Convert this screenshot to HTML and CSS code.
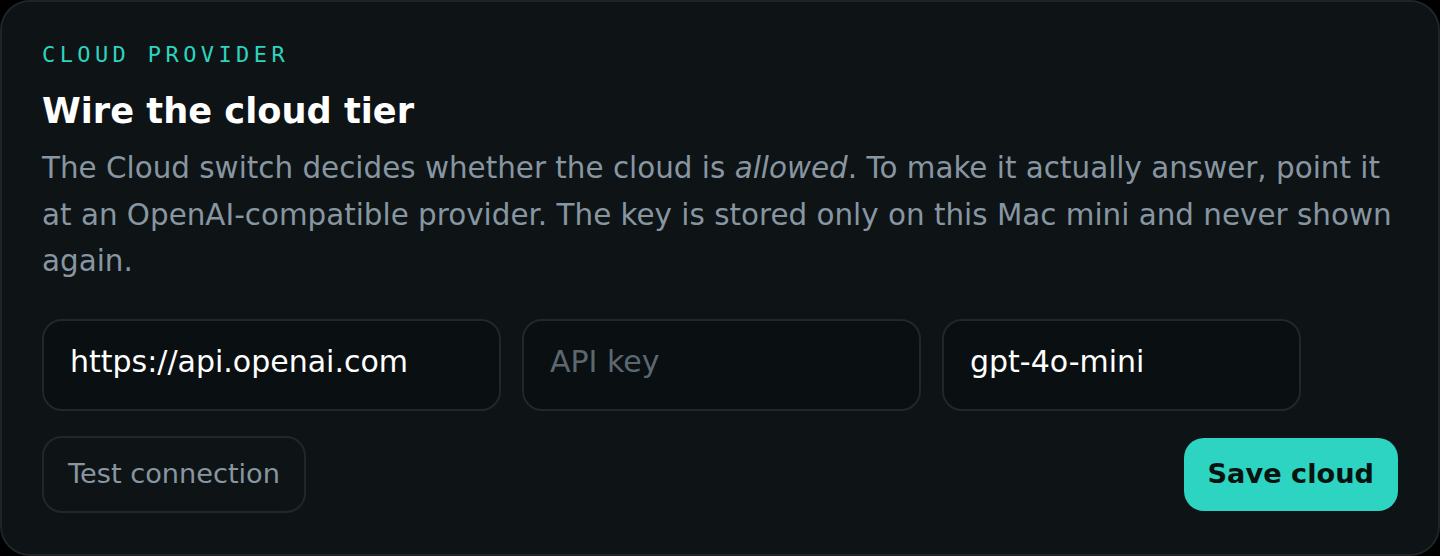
FILE: index.html
```html
<!DOCTYPE html>
<html lang="en">
<head>
  <meta charset="UTF-8">
  <title>Cloud provider</title>
  <meta name="viewport" content="width=device-width, initial-scale=1.0">
  <link rel="stylesheet" href="styles.css">
</head>
<body>

<section class="card">
  <div class="eyebrow">CLOUD PROVIDER</div>
  <h2>Wire the cloud tier</h2>
  <p class="lead">
    The Cloud switch decides whether the cloud is <em>allowed</em>. To make it actually answer, point it
    at an OpenAI-compatible provider. The key is stored only on this Mac mini and never shown
    again.
  </p>

  <div class="fields">
    <input type="text" class="field field-url" value="https://api.openai.com">
    <input type="password" class="field field-key" placeholder="API key">
    <input type="text" class="field field-model" value="gpt-4o-mini">
  </div>

  <div class="actions">
    <button class="btn btn-ghost">Test connection</button>
    <button class="btn btn-primary">Save cloud</button>
  </div>
</section>

</body>
</html>
```

FILE: styles.css
```css
body {
  margin: 0;
  background: #000;
  font-family: "DejaVu Sans", sans-serif;
}

.card {
  box-sizing: border-box;
  width: 1440px;
  height: 556px;
  background: #0e1316;
  border: 2px solid #1d2529;
  border-radius: 30px;
  padding: 42px 40px 40px;
}

.eyebrow {
  font-family: "DejaVu Sans Mono", monospace;
  font-size: 22px;
  line-height: 22px;
  letter-spacing: 0.2em;
  color: #2dd4bf;
}

h2 {
  margin: 23px 0 0;
  font-size: 35.2px;
  line-height: 43px;
  font-weight: bold;
  color: #fff;
}

.lead {
  margin: 13px 0 0;
  font-size: 29.4px;
  line-height: 46.5px;
  color: #8796a1;
}

.fields {
  display: flex;
  gap: 21px;
  margin-top: 34px;
}

.field {
  box-sizing: border-box;
  height: 92px;
  padding: 0 26px 6px;
  font-family: "DejaVu Sans", sans-serif;
  font-size: 30px;
  color: #fff;
  background: #0a0f12;
  border: 2px solid #1f282d;
  border-radius: 20px;
  outline: none;
}

.field::placeholder {
  color: #5b6870;
}

.field-url { width: 459px; }
.field-key { width: 399px; }
.field-model { width: 359px; }

.actions {
  display: flex;
  justify-content: space-between;
  align-items: center;
  margin-top: 25px;
}

.btn {
  font-family: "DejaVu Sans", sans-serif;
  font-size: 27.2px;
  line-height: 33px;
  padding: 19px 24px 21px;
  border-radius: 20px;
  cursor: pointer;
}

.btn-ghost {
  background: transparent;
  color: #8796a1;
  border: 2px solid #1f282d;
}

.btn-primary {
  background: #2dd4c2;
  color: #08120f;
  border: none;
  font-weight: bold;
}
```
